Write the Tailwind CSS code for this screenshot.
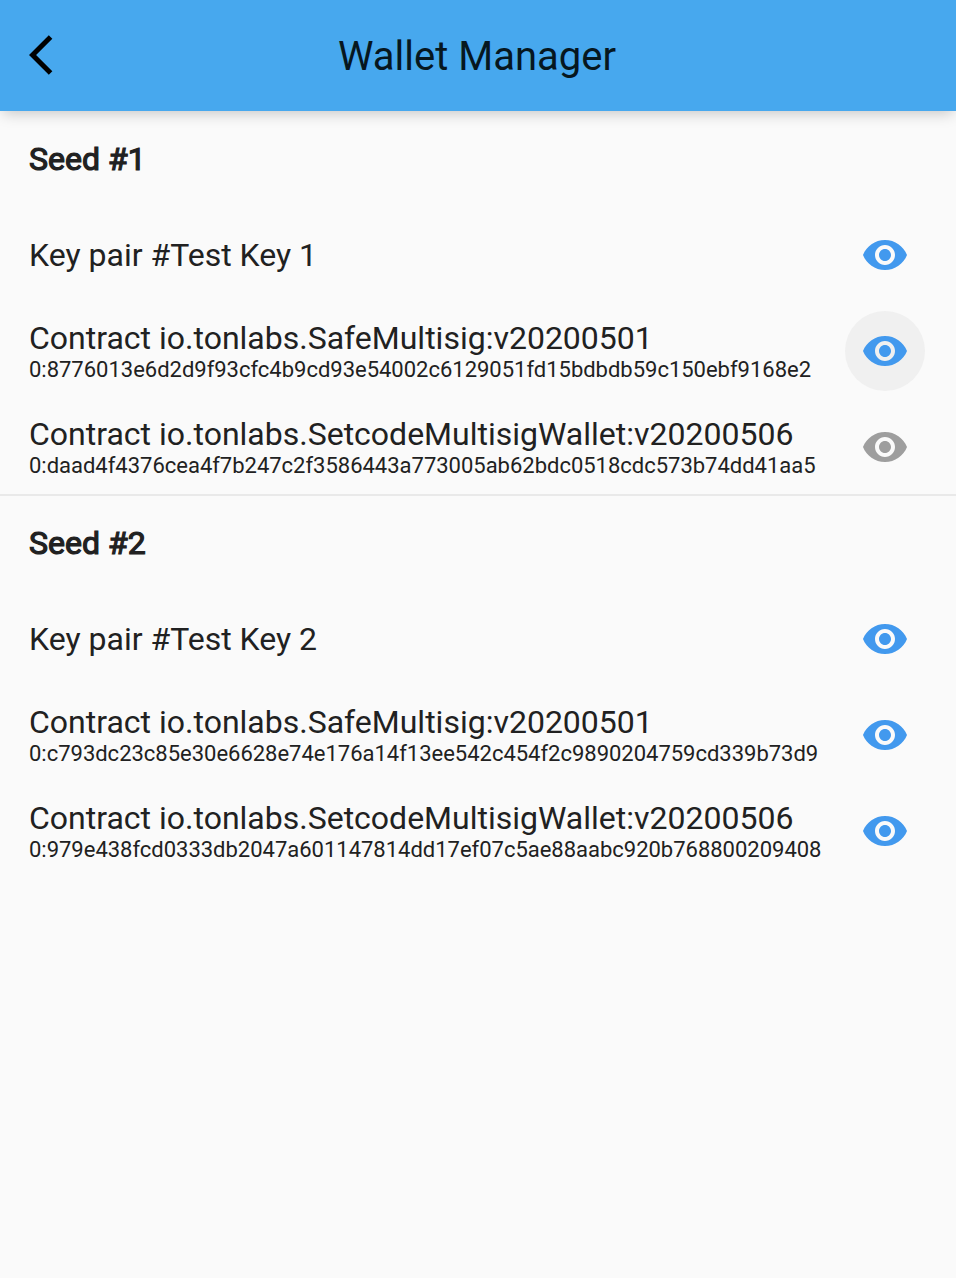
<!DOCTYPE html>
<html lang="en"><head><meta charset="utf-8"><title>Wallet Manager</title>
<script src="https://cdn.jsdelivr.net/npm/@tailwindcss/browser@4"></script></head>
<body class="bg-[#fafafa] font-[Roboto,sans-serif] text-[#212121] h-[1278px] overflow-hidden">
<svg class="hidden"><symbol id="eye" viewBox="0 0 24 24"><path d="M12 4.5C7 4.5 2.73 7.61 1 12c1.73 4.39 6 7.5 11 7.5s9.27-3.11 11-7.5c-1.73-4.39-6-7.5-11-7.5zM12 17c-2.76 0-5-2.24-5-5s2.24-5 5-5 5 2.24 5 5-2.24 5-5 5zm0-8c-1.66 0-3 1.34-3 3s1.34 3 3 3 3-1.34 3-3-1.34-3-3-3z"/></symbol></svg>
<header class="grid grid-cols-[100px_1fr_102px] items-center h-[111px] bg-[#47a8ee] shadow-[0_5px_14px_-3px_rgba(0,0,0,0.22)]">
<button class="pl-[21px] pb-px" aria-label="Back"><svg class="w-12 h-12" viewBox="0 0 24 24"><path d="M11.67 3.87L9.9 2.1 0 12l9.9 9.9 1.77-1.77L3.54 12z" transform="translate(4 0)"/></svg></button>
<h1 class="pt-[2px] text-center text-[40px] leading-[48px] text-[#06171f]">Wallet Manager</h1>
</header>
<main class="text-[32px] leading-[38px]">
<section class="border-b-2 border-[#e9e9e9] h-[385px]">
<h2 class="flex items-center h-24 pl-[29px] [-webkit-text-stroke:1.2px_#212121]">Seed #1</h2>
<div class="flex items-center justify-between h-24 pl-[29px] pr-[31px]"><p>Key pair #Test Key 1</p><button class="size-20 rounded-full grid place-items-center"><svg class="size-12 fill-[#4299ee]"><use href="#eye"/></svg></button></div>
<div class="flex items-center justify-between h-24 pl-[29px] pr-[31px]"><div><p>Contract io.tonlabs.SafeMultisig:v20200501</p><p class="text-[22px] leading-[26px] tracking-[-0.012px]">0:8776013e6d2d9f93cfc4b9cd93e54002c6129051fd15bdbdb59c150ebf9168e2</p></div><button class="size-20 rounded-full grid place-items-center bg-[#f0f0f0]"><svg class="size-12 fill-[#4299ee]"><use href="#eye"/></svg></button></div>
<div class="flex items-center justify-between h-24 pl-[29px] pr-[31px]"><div><p>Contract io.tonlabs.SetcodeMultisigWallet:v20200506</p><p class="text-[22px] leading-[26px] tracking-[-0.012px]">0:daad4f4376cea4f7b247c2f3586443a773005ab62bdc0518cdc573b74dd41aa5</p></div><button class="size-20 rounded-full grid place-items-center"><svg class="size-12 fill-[#9e9e9e]"><use href="#eye"/></svg></button></div>
</section>
<section class="-mt-px">
<h2 class="flex items-center h-24 pl-[29px] [-webkit-text-stroke:1.2px_#212121]">Seed #2</h2>
<div class="flex items-center justify-between h-24 pl-[29px] pr-[31px]"><p>Key pair #Test Key 2</p><button class="size-20 rounded-full grid place-items-center"><svg class="size-12 fill-[#4299ee]"><use href="#eye"/></svg></button></div>
<div class="flex items-center justify-between h-24 pl-[29px] pr-[31px]"><div><p>Contract io.tonlabs.SafeMultisig:v20200501</p><p class="text-[22px] leading-[26px] tracking-[-0.012px]">0:c793dc23c85e30e6628e74e176a14f13ee542c454f2c9890204759cd339b73d9</p></div><button class="size-20 rounded-full grid place-items-center"><svg class="size-12 fill-[#4299ee]"><use href="#eye"/></svg></button></div>
<div class="flex items-center justify-between h-24 pl-[29px] pr-[31px]"><div><p>Contract io.tonlabs.SetcodeMultisigWallet:v20200506</p><p class="text-[22px] leading-[26px] tracking-[-0.012px]">0:979e438fcd0333db2047a601147814dd17ef07c5ae88aabc920b768800209408</p></div><button class="size-20 rounded-full grid place-items-center"><svg class="size-12 fill-[#4299ee]"><use href="#eye"/></svg></button></div>
</section>
</main></body></html>
